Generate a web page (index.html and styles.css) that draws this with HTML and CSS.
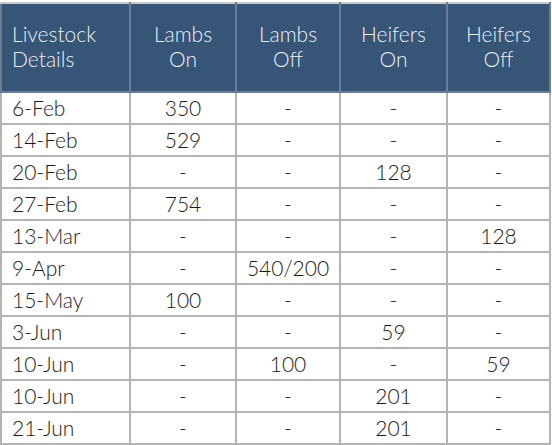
FILE: index.html
```html
<!DOCTYPE html>
<html lang="en">
<head>
    <meta charset="UTF-8">
    <title>Livestock Details</title>
    <link rel="stylesheet" href="styles.css">
</head>
<body>
    <table class="livestock">
        <thead>
            <tr>
                <th class="col-date">Livestock<br>Details</th>
                <th>Lambs<br>On</th>
                <th>Lambs<br>Off</th>
                <th>Heifers<br>On</th>
                <th>Heifers<br>Off</th>
            </tr>
        </thead>
        <tbody>
            <tr><td class="col-date">6-Feb</td><td>350</td><td>-</td><td>-</td><td>-</td></tr>
            <tr><td class="col-date">14-Feb</td><td>529</td><td>-</td><td>-</td><td>-</td></tr>
            <tr><td class="col-date">20-Feb</td><td>-</td><td>-</td><td>128</td><td>-</td></tr>
            <tr><td class="col-date">27-Feb</td><td>754</td><td>-</td><td>-</td><td>-</td></tr>
            <tr><td class="col-date">13-Mar</td><td>-</td><td>-</td><td>-</td><td>128</td></tr>
            <tr><td class="col-date">9-Apr</td><td>-</td><td>540/200</td><td>-</td><td>-</td></tr>
            <tr><td class="col-date">15-May</td><td>100</td><td>-</td><td>-</td><td>-</td></tr>
            <tr><td class="col-date">3-Jun</td><td>-</td><td>-</td><td>59</td><td>-</td></tr>
            <tr><td class="col-date">10-Jun</td><td>-</td><td>100</td><td>-</td><td>59</td></tr>
            <tr><td class="col-date">10-Jun</td><td>-</td><td>-</td><td>201</td><td>-</td></tr>
            <tr><td class="col-date">21-Jun</td><td>-</td><td>-</td><td>201</td><td>-</td></tr>
        </tbody>
    </table>
</body>
</html>
```

FILE: styles.css
```css
* {
    margin: 0;
    padding: 0;
    box-sizing: border-box;
}

body {
    font-family: 'Lato', 'Open Sans', sans-serif;
    background: #fff;
    padding-top: 2px;
}

.livestock {
    border-collapse: collapse;
    width: 551px;
    table-layout: fixed;
    font-weight: 300;
}

.livestock th,
.livestock td {
    border: 2px solid #b4b4b4;
    text-align: center;
    font-size: 21px;
}

.livestock th {
    background: #365577;
    color: #e9eff6;
    font-weight: 300;
    height: 89px;
    line-height: 25px;
    padding-bottom: 3px;
    border-color: #6d7c8e;
    border-top-color: #c8c8c8;
}

.livestock td {
    height: 32px;
    color: #1a1a1a;
    line-height: 22px;
}

.livestock th:nth-child(1) { width: 129px; }
.livestock th:nth-child(2) { width: 106px; }
.livestock th:nth-child(3) { width: 104px; }
.livestock th:nth-child(4) { width: 107px; }

.livestock .col-date {
    text-align: left;
    padding-left: 10px;
}
```
